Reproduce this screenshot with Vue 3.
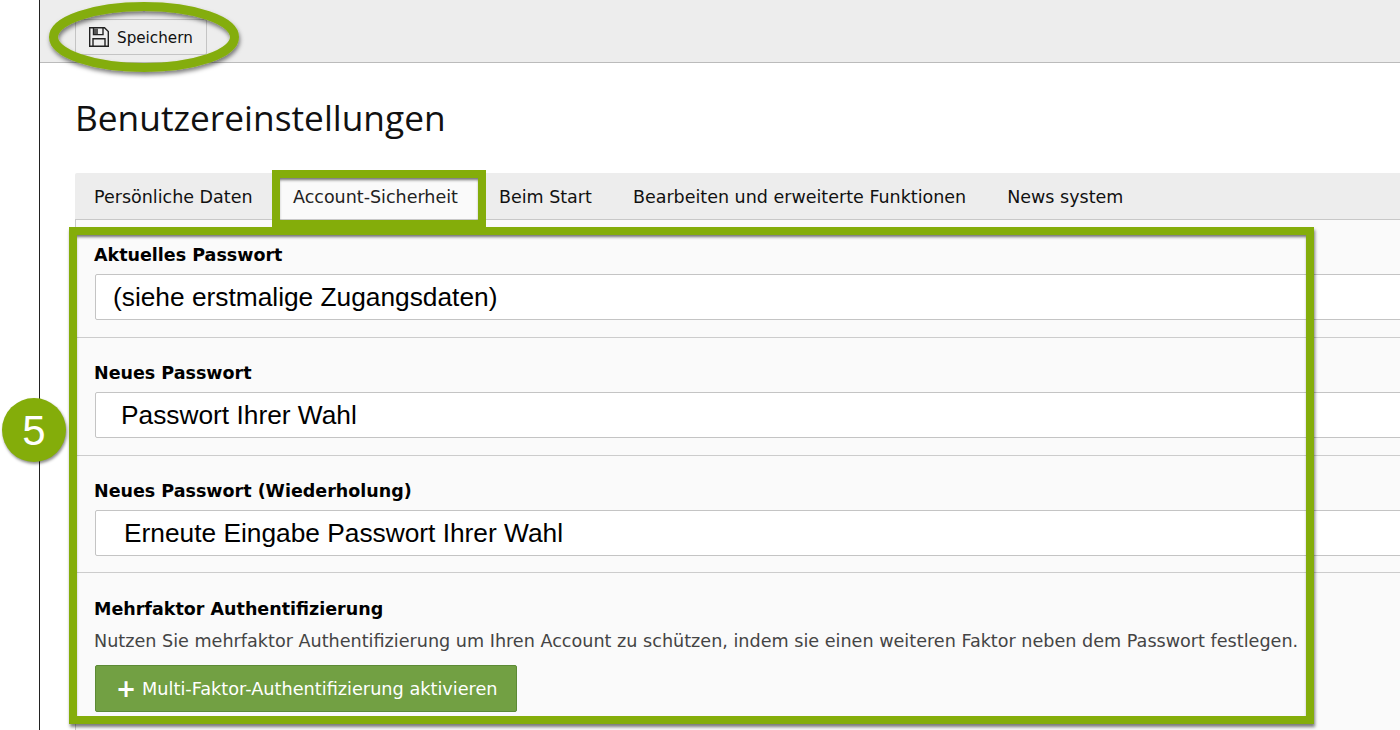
<script setup>
const tabs = [
  { label: 'Persönliche Daten' },
  { label: 'Account-Sicherheit', active: true },
  { label: 'Beim Start' },
  { label: 'Bearbeiten und erweiterte Funktionen' },
  { label: 'News system' },
]
const fields = [
  { label: 'Aktuelles Passwort', value: '(siehe erstmalige Zugangsdaten)', cls: 'pad-a' },
  { label: 'Neues Passwort', value: 'Passwort Ihrer Wahl', cls: 'pad-b' },
  { label: 'Neues Passwort (Wiederholung)', value: 'Erneute Eingabe Passwort Ihrer Wahl', cls: 'pad-c' },
]
</script>

<template>
  <div class="page">
    <main class="main">
      <header class="toolbar">
        <button class="save" type="button">
          <svg width="22" height="22" viewBox="0 0 22 22" fill="none" stroke="#222" stroke-width="1.4">
            <path d="M1.7 1.7H16.5L20.3 5.5V20.3H1.7Z" />
            <path d="M5.5 1.7V8.6H15V1.7" />
            <path d="M5 20.3V12.8H17V20.3" />
            <rect x="6" y="2.5" width="4" height="5.5" fill="#555" stroke="none" />
          </svg>
          <span class="save-text">Speichern</span>
        </button>
      </header>
      <section class="content">
        <h1 class="title">Benutzereinstellungen</h1>
        <nav class="tabs">
          <a v-for="t in tabs" :key="t.label" class="tab" :class="{ active: t.active }">{{ t.label }}</a>
        </nav>
        <div class="panel">
          <div v-for="f in fields" :key="f.label" class="row">
            <label class="label">{{ f.label }}</label>
            <input class="field" :class="f.cls" :value="f.value" readonly />
          </div>
          <div class="row last">
            <label class="label">Mehrfaktor Authentifizierung</label>
            <p class="help">Nutzen Sie mehrfaktor Authentifizierung um Ihren Account zu schützen, indem sie einen weiteren Faktor neben dem Passwort festlegen.</p>
            <button class="mfa" type="button"><span class="plus">+</span>Multi-Faktor-Authentifizierung aktivieren</button>
          </div>
        </div>
      </section>
    </main>
    <svg class="ring" width="200" height="80" viewBox="0 0 200 80">
      <defs>
        <filter id="ringShadow" x="-10%" y="-20%" width="120%" height="150%">
          <feDropShadow dx="1" dy="3" stdDeviation="2" flood-color="#000" flood-opacity=".5" />
        </filter>
      </defs>
      <ellipse cx="99" cy="37" rx="90.5" ry="30.5" fill="none" stroke="#84ad0a" stroke-width="9" filter="url(#ringShadow)" />
    </svg>
    <div class="mark mark-panel"></div>
    <div class="mark mark-tab"></div>
    <div class="badge">5</div>
  </div>
</template>

<style>
html, body { margin: 0; background: #fff; overflow: hidden; }
</style>

<style scoped>
.page { position: relative; width: 1400px; height: 730px; overflow: hidden; background: #fff; font-family: "DejaVu Sans", sans-serif; }
.main { margin-left: 39px; height: 730px; border-left: 1px solid #222; box-sizing: border-box; }
.toolbar { height: 62px; background: #ededed; border-bottom: 1px solid #bbb; display: flex; align-items: flex-end; padding-left: 35px; }
.save { width: 132px; height: 36px; margin-bottom: 7px; box-sizing: border-box; background: #eee; border: 1px solid #c4c4c4; border-radius: 2px; display: flex; align-items: center; gap: 7px; padding: 0 0 0 12px; font: 15.2px "DejaVu Sans", sans-serif; color: #111; }
.save-text { padding-top: 1px; }
.content { padding-left: 35px; }
.title { margin: 0; padding-top: 30px; height: 80px; font: 400 35.3px/48px "Open Sans", sans-serif; color: #111; }
.tabs { height: 46px; display: flex; background: #ededed; border-radius: 2px 0 0 0; }
.tab { padding: 0 20.5px; line-height: 48px; font-size: 17.5px; color: #111; white-space: nowrap; }
.tab:first-child { padding: 0 20px 0 19px; }
.tab.active { background: #fafafa; color: #222; }
.panel { border-left: 1px solid #c8c8c8; border-top: 1px solid #c8c8c8; background: #fafafa; }
.row { padding: 26px 0 0 18px; height: 91px; border-bottom: 1px solid #ccc; }
.row:nth-child(3) { height: 90px; }
.row.last { border-bottom: 0; height: 200px; padding-top: 27px; }
.label { display: block; font-size: 17.5px; font-weight: 700; line-height: 18px; color: #000; margin-bottom: 10px; white-space: nowrap; }
.field { display: block; width: 1400px; height: 46px; margin-left: 1px; box-sizing: border-box; background: #fff; border: 1px solid #c4c4c4; border-radius: 2px; font: 26.3px "Liberation Sans", sans-serif; color: #000; outline: 0; }
.pad-a { padding-left: 17px; }
.pad-b { padding-left: 25px; }
.pad-c { padding-left: 28px; }
.help { margin: 13px 0 14px; font-size: 17.6px; line-height: 20px; color: #444; white-space: nowrap; }
.mfa { width: 422px; height: 47px; margin-left: 1px; background: #72a043; border: 1px solid #5c8a35; border-radius: 2px; color: #fff; font: 17.7px "DejaVu Sans", sans-serif; display: flex; align-items: center; padding: 0 0 0 20px; box-sizing: border-box; }
.plus { font-size: 24px; font-weight: 700; margin-right: 6px; line-height: 20px; }
.ring { position: absolute; left: 45px; top: 0; }
.mark { position: absolute; box-sizing: border-box; border: 8px solid #84ad0a; }
.mark-tab { left: 272px; top: 170px; width: 214px; height: 58px; box-shadow: inset 0 3px 3px -1px rgba(0,0,0,.55); clip-path: inset(0); }
.mark-tab::after { content: ""; position: absolute; left: -8px; right: -8px; top: 50px; height: 8px; background: #84ad0a; }
.mark-panel { left: 69px; top: 227px; width: 1245px; height: 497px; box-shadow: 1px 3px 3px rgba(0,0,0,.5), inset 0 3px 3px -1px rgba(0,0,0,.55); }
.badge { position: absolute; left: 2px; top: 398px; width: 64px; height: 64px; border-radius: 50%; background: #84ad0a; box-shadow: 1px 2px 3px rgba(0,0,0,.45); color: #fff; font: 42px/66px "Liberation Sans", sans-serif; text-align: center; }
</style>
